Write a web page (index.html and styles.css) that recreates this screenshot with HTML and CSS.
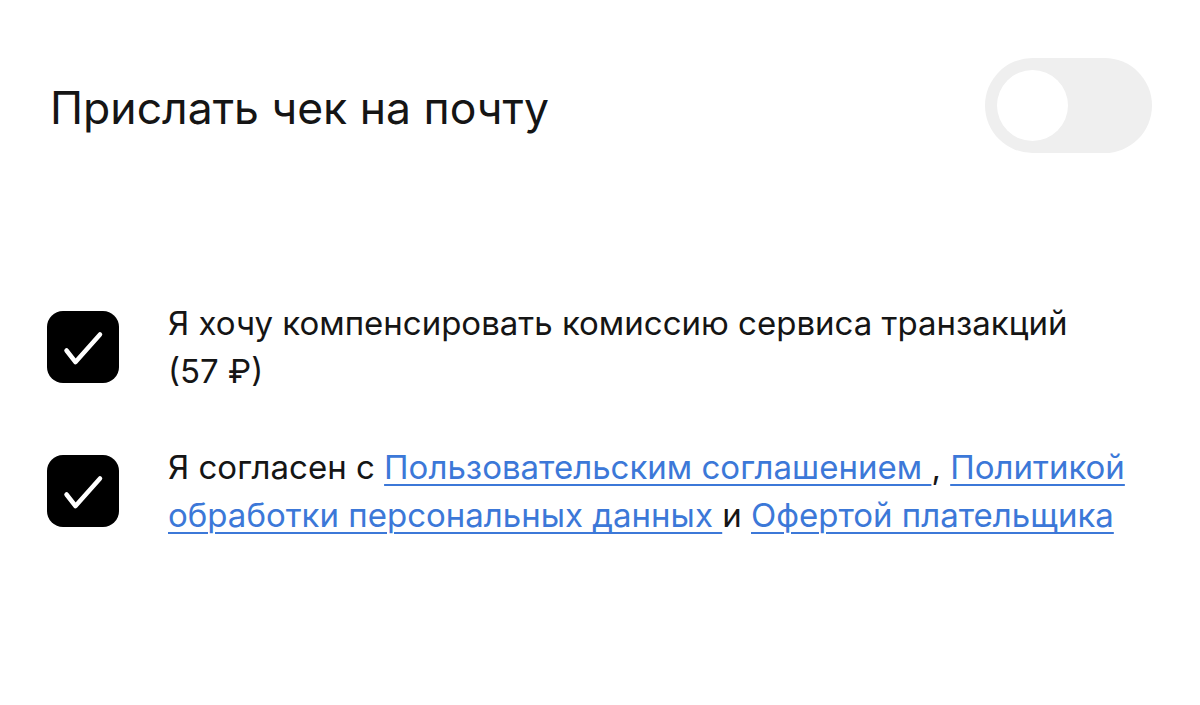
FILE: index.html
```html
<!DOCTYPE html>
<html lang="ru">
<head>
<meta charset="utf-8">
<link rel="stylesheet" href="styles.css">
</head>
<body>
<div class="page">
  <div class="header">
    <h1 class="title">Прислать чек на почту</h1>
    <div class="toggle"><div class="knob"></div></div>
  </div>
  <div class="items">
    <div class="item">
      <div class="check">
        <svg width="72" height="72" viewBox="0 0 72 72"><path d="M19.5 39.5 L28.5 51 L53 23.5" fill="none" stroke="#fff" stroke-width="4.5" stroke-linecap="round" stroke-linejoin="round"/></svg>
      </div>
      <div class="text">Я хочу компенсировать комиссию сервиса транзакций (57&nbsp;₽)</div>
    </div>
    <div class="item">
      <div class="check">
        <svg width="72" height="72" viewBox="0 0 72 72"><path d="M19.5 39.5 L28.5 51 L53 23.5" fill="none" stroke="#fff" stroke-width="4.5" stroke-linecap="round" stroke-linejoin="round"/></svg>
      </div>
      <div class="text">Я согласен с <a href="#">Пользовательским соглашением </a>, <a href="#">Политикой обработки персональных данных </a>и <a href="#">Офертой плательщика</a></div>
    </div>
  </div>
</div>
</body>
</html>
```
FILE: styles.css
```css
html, body {
  margin: 0;
  padding: 0;
  background: #fff;
}
body {
  font-family: Inter, "Noto Sans", sans-serif;
  color: #151515;
}
.page {
  padding: 58px 48px 0 47px;
}
.header {
  display: flex;
  justify-content: space-between;
  align-items: flex-start;
}
.title {
  margin: 22px 0 0 3px;
  font-size: 44.5px;
  font-weight: 400;
  line-height: 56px;
  letter-spacing: 0;
}
.toggle {
  width: 167px;
  height: 95px;
  border-radius: 48px;
  background: #efefef;
  padding: 12px;
  box-sizing: border-box;
}
.knob {
  width: 71px;
  height: 71px;
  border-radius: 50%;
  background: #fff;
}
.items {
  margin-top: 158px;
  display: flex;
  flex-direction: column;
  gap: 60px;
}
.item {
  display: flex;
  align-items: flex-start;
  gap: 49px;
}
.check {
  flex: none;
  width: 72px;
  height: 72px;
  border-radius: 16px;
  background: #000;
  display: flex;
}
.text {
  width: 972px;
  font-size: 33px;
  line-height: 48px;
  margin-top: -12px;
}
.text a {
  color: #3c78d8;
  text-decoration: underline;
  text-underline-offset: 5px;
  text-decoration-thickness: 2px;
}
```
